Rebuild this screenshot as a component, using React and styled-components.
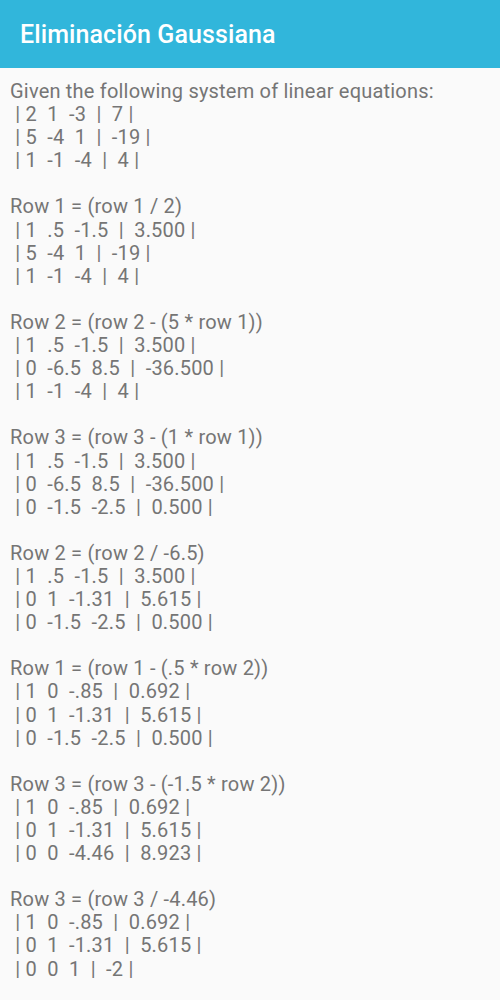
import React from 'react';
import styled, { createGlobalStyle } from 'styled-components';

const GlobalStyle = createGlobalStyle`
    body {
        margin: 0;
        background: #fafafa;
        font-family: Roboto, "Liberation Sans", sans-serif;
    }
`;

const Screen = styled.div`
    min-height: 1000px;
    background: #fafafa;
`;

const AppBar = styled.header`
    height: 68px;
    background: #31b6db;
    display: flex;
    align-items: center;
    padding: 0 20px;
`;

const Title = styled.h1`
    margin: 0;
    color: #ffffff;
    font-size: 25px;
    font-weight: 500;
    letter-spacing: 0.1px;
`;

const Content = styled.main`
    padding: 12px 10px;
    color: #757575;
    font-size: 20px;
    letter-spacing: 0.2px;
    line-height: 23.1px;
    display: flex;
    flex-direction: column;
    gap: 23.1px;
`;

const Step = styled.section`
    display: flex;
    flex-direction: column;
`;

const Line = styled.div`
    white-space: pre;
`;

const steps = [
    {
        title: 'Given the following system of linear equations:',
        rows: [' | 2  1  -3  |  7 |', ' | 5  -4  1  |  -19 |', ' | 1  -1  -4  |  4 |'],
    },
    {
        title: 'Row 1 = (row 1 / 2)',
        rows: [' | 1  .5  -1.5  |  3.500 |', ' | 5  -4  1  |  -19 |', ' | 1  -1  -4  |  4 |'],
    },
    {
        title: 'Row 2 = (row 2 - (5 * row 1))',
        rows: [' | 1  .5  -1.5  |  3.500 |', ' | 0  -6.5  8.5  |  -36.500 |', ' | 1  -1  -4  |  4 |'],
    },
    {
        title: 'Row 3 = (row 3 - (1 * row 1))',
        rows: [' | 1  .5  -1.5  |  3.500 |', ' | 0  -6.5  8.5  |  -36.500 |', ' | 0  -1.5  -2.5  |  0.500 |'],
    },
    {
        title: 'Row 2 = (row 2 / -6.5)',
        rows: [' | 1  .5  -1.5  |  3.500 |', ' | 0  1  -1.31  |  5.615 |', ' | 0  -1.5  -2.5  |  0.500 |'],
    },
    {
        title: 'Row 1 = (row 1 - (.5 * row 2))',
        rows: [' | 1  0  -.85  |  0.692 |', ' | 0  1  -1.31  |  5.615 |', ' | 0  -1.5  -2.5  |  0.500 |'],
    },
    {
        title: 'Row 3 = (row 3 - (-1.5 * row 2))',
        rows: [' | 1  0  -.85  |  0.692 |', ' | 0  1  -1.31  |  5.615 |', ' | 0  0  -4.46  |  8.923 |'],
    },
    {
        title: 'Row 3 = (row 3 / -4.46)',
        rows: [' | 1  0  -.85  |  0.692 |', ' | 0  1  -1.31  |  5.615 |', ' | 0  0  1  |  -2 |'],
    },
];

export default function App() {
    return (
        <Screen>
            <GlobalStyle />
            <AppBar>
                <Title>Eliminación Gaussiana</Title>
            </AppBar>
            <Content>
                {steps.map((step, i) => (
                    <Step key={i}>
                        <Line>{step.title}</Line>
                        {step.rows.map((row, j) => (
                            <Line key={j}>{row}</Line>
                        ))}
                    </Step>
                ))}
            </Content>
        </Screen>
    );
}
